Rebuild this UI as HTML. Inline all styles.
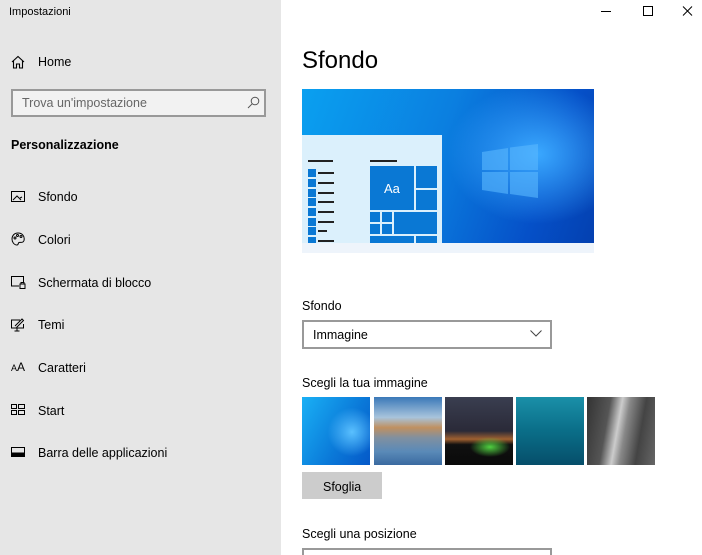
<!DOCTYPE html>
<html style="width:702px;height:555px;overflow:hidden"><head><meta charset="utf-8"><style>
*{margin:0;padding:0;box-sizing:border-box}
body{width:702px;height:555px;overflow:hidden;font-family:"Liberation Sans",sans-serif;background:#fff;position:relative;color:#000}
.side{position:absolute;left:0;top:0;width:281px;height:555px;background:#e6e6e6}
.a{position:absolute;white-space:nowrap}
.nav{font-size:12.5px;left:38px}
.ic{position:absolute;left:11px}
.th{position:absolute;top:397px;width:68px;height:68px}
</style></head><body>
<div class="side">
<div class="a" style="left:9px;top:6px;font-size:11px">Impostazioni</div>
<svg class="ic" style="top:55px" width="14" height="14" viewBox="0 0 14 14" fill="none" stroke="#000" stroke-width="1.1"><path d="M1 7L7 1.5 13 7M2.5 5.8V13H5.5V9H8.5V13H11.5V5.8"/></svg>
<div class="a nav" style="top:55px">Home</div>
<div class="a" style="left:11px;top:89px;width:255px;height:28px;border:2px solid #999;background:#f2f2f2"></div>
<div class="a" style="left:22px;top:96px;font-size:12.5px;color:#666">Trova un'impostazione</div>
<svg class="a" style="left:247px;top:96px" width="13" height="13" viewBox="0 0 13 13" fill="none" stroke="#555" stroke-width="1"><circle cx="8" cy="5" r="3.8"/><path d="M5.3 7.7L1 12"/></svg>
<div class="a" style="left:11px;top:138px;font-size:12.5px;font-weight:bold">Personalizzazione</div>
<svg class="ic" style="top:191px" width="14" height="12" viewBox="0 0 14 12" fill="none" stroke="#000" stroke-width="1"><rect x=".5" y=".5" width="13" height="10"/><path d="M2 9L6 5 10 9M9 7l2-1"/></svg>
<div class="a nav" style="top:190px">Sfondo</div>
<svg class="ic" style="top:232px" width="14" height="14" viewBox="0 0 14 14" fill="none" stroke="#000" stroke-width="1"><path d="M7 1C3 1 1 4 1 7s2 6 5 6c1.5 0 1-2 2-2.5s4 1 5-2C14 4 11 1 7 1z"/><circle cx="4" cy="6" r="1"/><circle cx="6.5" cy="3.5" r="1"/><circle cx="10" cy="4.5" r="1"/></svg>
<div class="a nav" style="top:233px">Colori</div>
<svg class="ic" style="top:276px" width="15" height="13" viewBox="0 0 15 13" fill="none" stroke="#000" stroke-width="1"><path d="M8 10H.5V.5h12V6"/><rect x="9" y="8" width="5" height="4.5"/><path d="M10 8V6.5h3V8"/></svg>
<div class="a nav" style="top:276px">Schermata di blocco</div>
<svg class="ic" style="top:318px" width="15" height="14" viewBox="0 0 15 14" fill="none" stroke="#000" stroke-width="1"><path d="M9 2H.5v8h12V6M6 10v3M3.5 13h5M4 8l7-7 1.5 1.5-7 7"/></svg>
<div class="a nav" style="top:318px">Temi</div>
<div class="a" style="left:11px;top:360px;font-size:9px">A<span style="font-size:12px">A</span></div>
<div class="a nav" style="top:361px">Caratteri</div>
<svg class="ic" style="top:404px" width="14" height="11" viewBox="0 0 14 11" fill="none" stroke="#000" stroke-width="1"><rect x=".5" y=".5" width="5" height="4"/><rect x="7.5" y=".5" width="6" height="4"/><rect x=".5" y="6.5" width="5" height="4"/><rect x="7.5" y="6.5" width="6" height="4"/></svg>
<div class="a nav" style="top:404px">Start</div>
<svg class="ic" style="top:447px" width="14" height="10" viewBox="0 0 14 10" fill="none" stroke="#000" stroke-width="1"><rect x=".5" y=".5" width="13" height="9"/><rect x="1" y="6" width="12" height="3" fill="#000"/></svg>
<div class="a nav" style="top:446px">Barra delle applicazioni</div>
</div>

<svg class="a" style="left:600px;top:5px" width="100" height="12" viewBox="0 0 100 12" fill="none" stroke="#000" stroke-width="1"><path d="M1 6.5h10"/><rect x="43.5" y="1.5" width="9" height="9"/><path d="M83 1.5l9 9M92 1.5l-9 9"/></svg>

<div class="a" style="left:302px;top:47px;font-size:24px">Sfondo</div>

<div class="a" style="left:302px;top:89px;width:292px;height:164px;background:#eef4fb">
<div class="a" style="left:0;top:0;width:292px;height:154px;background:radial-gradient(ellipse 90px 70px at 235px 65px,#3aa8ff,rgba(0,120,230,0) 100%),linear-gradient(110deg,#0aa0f0 0%,#0b7fe0 45%,#0550c8 80%,#0440b0 100%)"></div>
<svg class="a" style="left:180px;top:55px" width="56" height="54" viewBox="0 0 56 54"><g fill="#5ab8ff" opacity=".6"><path d="M0 8L26 4V26H0z"/><path d="M28 3.5L56 0V26H28z"/><path d="M0 28H26V50L0 46z"/><path d="M28 28H56V54L28 50z"/></g></svg>
<div class="a" style="left:0;top:46px;width:140px;height:108px;background:#dbf0fc">
<div class="a" style="left:6px;top:25px;width:25px;height:2px;background:#222"></div>
<div class="a" style="left:68px;top:25px;width:27px;height:2px;background:#222"></div>
</div>
<svg class="a" style="left:6px;top:80px" width="30" height="74"><g fill="#0a78d4"><rect x="0" y="0" width="8" height="8"/><rect x="0" y="10" width="8" height="8"/><rect x="0" y="20" width="8" height="8"/><rect x="0" y="29" width="8" height="8"/><rect x="0" y="39" width="8" height="8"/><rect x="0" y="49" width="8" height="8"/><rect x="0" y="58" width="8" height="8"/><rect x="0" y="68" width="8" height="6"/></g><g fill="#222"><rect x="10" y="3" width="16" height="2"/><rect x="10" y="13" width="16" height="2"/><rect x="10" y="23" width="16" height="2"/><rect x="10" y="32" width="16" height="2"/><rect x="10" y="42" width="16" height="2"/><rect x="10" y="52" width="16" height="2"/><rect x="10" y="61" width="9" height="2"/><rect x="10" y="71" width="16" height="2"/></g></svg>
<svg class="a" style="left:68px;top:77px" width="67" height="77" viewBox="0 0 67 77" fill="#0a78d4"><rect x="0" y="0" width="44" height="44"/><rect x="46" y="0" width="21" height="22"/><rect x="46" y="24" width="21" height="20"/><rect x="0" y="46" width="10" height="10"/><rect x="12" y="46" width="10" height="10"/><rect x="0" y="58" width="10" height="10"/><rect x="12" y="58" width="10" height="10"/><rect x="24" y="46" width="43" height="22"/><rect x="0" y="70" width="44" height="7"/><rect x="46" y="70" width="21" height="7"/><text x="14" y="27" font-family="Liberation Sans" font-size="13" fill="#fff">Aa</text></svg>
</div>

<div class="a" style="left:302px;top:299px;font-size:12.5px">Sfondo</div>
<div class="a" style="left:302px;top:320px;width:250px;height:29px;border:2px solid #999"></div>
<div class="a" style="left:313px;top:328px;font-size:12.5px">Immagine</div>
<svg class="a" style="left:530px;top:330px" width="12" height="7" fill="none" stroke="#444" stroke-width="1"><path d="M.5 .5l5.5 5.5 5.5-5.5"/></svg>

<div class="a" style="left:302px;top:376px;font-size:12.5px">Scegli la tua immagine</div>
<div class="th" style="left:302px;background:radial-gradient(circle at 50px 35px,#5ac0ff,rgba(0,0,0,0) 40%),linear-gradient(120deg,#1ab0f5,#0a78d8 60%,#0558c8)"></div>
<div class="th" style="left:374px;background:linear-gradient(180deg,#3a78b8 0%,#a8c4dc 30%,#c09060 45%,#8090a0 60%,#5a8ab8 80%,#3a6aa0)"></div>
<div class="th" style="left:445px;background:radial-gradient(ellipse 20px 10px at 45px 50px,#50d040,rgba(0,0,0,0) 100%),linear-gradient(180deg,#3a3e50 0%,#2a2a38 50%,#a06030 62%,#101010 70%,#0a0a0a)"></div>
<div class="th" style="left:516px;background:linear-gradient(180deg,#1a90a8,#0a6e88 50%,#064e6a)"></div>
<div class="th" style="left:587px;background:linear-gradient(100deg,#333 0%,#555 30%,#ccc 45%,#888 55%,#444 75%,#666)"></div>

<div class="a" style="left:302px;top:472px;width:80px;height:27px;background:#ccc"></div>
<div class="a" style="left:323px;top:480px;font-size:12.5px">Sfoglia</div>

<div class="a" style="left:302px;top:527px;font-size:12.5px">Scegli una posizione</div>
<div class="a" style="left:302px;top:548px;width:250px;height:7px;border:2px solid #999;border-bottom:none"></div>
</body></html>
